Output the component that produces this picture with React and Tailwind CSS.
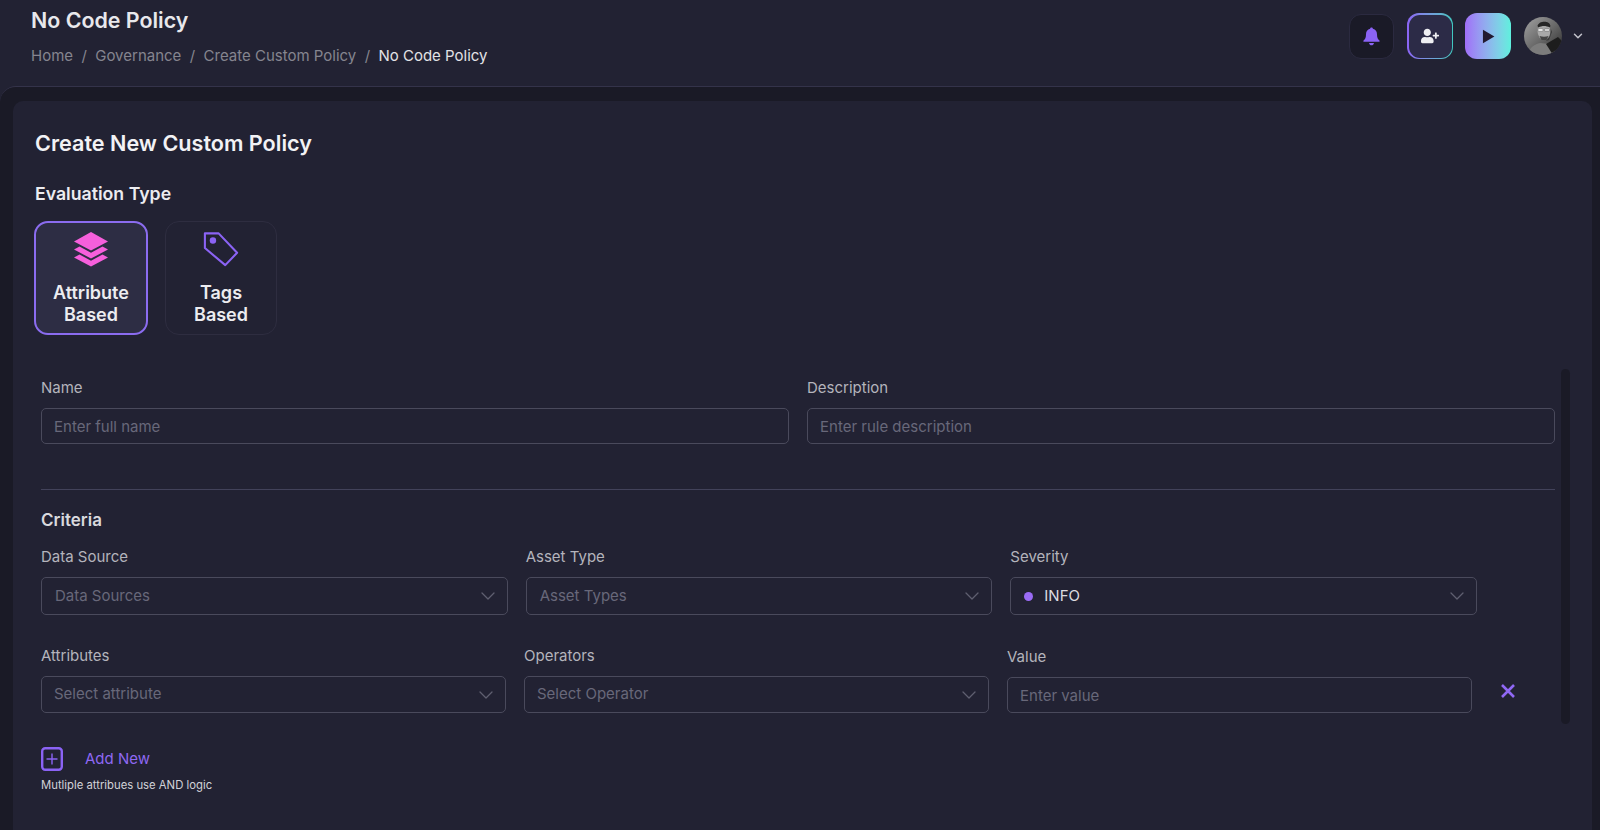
import { ChevronDown } from 'lucide-react'
import { FaUserPlus } from 'react-icons/fa'

function Avatar() {
  return (
    <svg viewBox="0 0 38 38" className="h-[38px] w-[38px] rounded-full">
      <defs>
        <linearGradient id="avatarBg" x1="0" y1="0" x2="1" y2="1">
          <stop offset="0" stopColor="#a3a3a3" />
          <stop offset="0.5" stopColor="#6a6a6a" />
          <stop offset="1" stopColor="#2a2a2a" />
        </linearGradient>
      </defs>
      <rect width="38" height="38" fill="url(#avatarBg)" />
      <path d="M4 38c1-8 7-11 12-12l10 1 8 11z" fill="#7c7c7c" />
      <path d="M22 27l12-7 4 4v14H29z" fill="#1d1d1d" />
      <ellipse cx="20" cy="14" rx="6.5" ry="9" fill="#a8a8a8" />
      <path d="M25 7c2 3 2 8 1 12l-4 5 3-1 3-8z" fill="#3a3a3a" />
      <path d="M13.5 9c1-5 12-6 13 0l-1 1.500c-3-2-8-2-11 0z" fill="#262626" />
      <rect x="14" y="11.5" width="5" height="3" rx="1" fill="#e4e4e4" stroke="#555" strokeWidth="0.4" />
      <rect x="20.5" y="11.5" width="5" height="3" rx="1" fill="#d0d0d0" stroke="#555" strokeWidth="0.4" />
      <path d="M15.5 19c3 1 6 1 9 0l-2 4h-5z" fill="#444" />
    </svg>
  )
}

function BellIcon() {
  return (
    <svg viewBox="0 0 17 19" className="h-[19px] w-[17px]" fill="#8b63f5">
      <path d="M8.5 0.5c.8 0 1.300.5 1.400 1.300C12.600 2.400 14 4.600 14 7.200c0 3.200.8 5 2.600 6.600.3.3.1.9-.4.9H.8c-.5 0-.7-.6-.4-.9C2.200 12.200 3 10.400 3 7.200c0-2.600 1.400-4.800 4.100-5.400.1-.8.6-1.300 1.400-1.300z" />
      <path d="M6 16h5c-.3 1.500-1.300 2.300-2.500 2.300S6.300 17.500 6 16z" />
    </svg>
  )
}

function Header() {
  return (
    <header className="flex h-[86px] shrink-0 items-start justify-between pl-[31px] pr-[15px]">
      <div>
        <h1 className="mt-[7px] text-[21.4px] leading-[26px] font-semibold text-[#e8e8ec]">No Code Policy</h1>
        <nav className="mt-[12px] flex items-center gap-[8.4px] text-[15px] leading-[22px] text-[#85858f]">
          <span>Home</span>
          <span>/</span>
          <span>Governance</span>
          <span>/</span>
          <span>Create Custom Policy</span>
          <span>/</span>
          <span className="text-[#e2e2e6]">No Code Policy</span>
        </nav>
      </div>
      <div className="mt-[13px] flex items-center">
        <button className="flex h-[45px] w-[45px] items-center justify-center rounded-[12px] border border-[#2b2a40] bg-[#1a1a27]">
          <BellIcon />
        </button>
        <div className="ml-[13px] h-[46px] w-[46px] rounded-[12px] bg-gradient-to-r from-[#8b63f5] to-[#3fc9c0] p-[1.5px]">
          <button className="flex h-full w-full items-center justify-center rounded-[11px] bg-[#2c2b47] text-[#eeeef2]">
            <FaUserPlus size={18} />
          </button>
        </div>
        <button className="ml-[12px] flex h-[46px] w-[46px] items-center justify-center rounded-[12px] bg-gradient-to-r from-[#a06ef7] to-[#5ef0dd]">
          <svg viewBox="0 0 12 14" className="h-[15px] w-[13px]">
            <path d="M0.8 0.8L11.5 7L0.8 13.2z" fill="#221a30" />
          </svg>
        </button>
        <div className="ml-[13px]">
          <Avatar />
        </div>
        <ChevronDown size={14} strokeWidth={2.5} className="ml-[9px] text-[#c4c4cc]" />
      </div>
    </header>
  )
}

function TypeCard({ active, icon, children, width }) {
  return (
    <div
      className={[
        'flex h-[114px] flex-col items-center rounded-[14px] pt-[8px] text-center text-[18px] leading-[21.5px] font-semibold text-[#ececf0]',
        width,
        active ? 'border-2 border-[#8b6cf0] bg-[#2d2d44]' : 'border border-[#2e2d40] bg-[#222233]',
      ].join(' ')}
    >
      {icon}
      <div className="mt-[15px]">{children}</div>
    </div>
  )
}

function LayersIcon() {
  return (
    <svg viewBox="0 0 36 36" className="h-[36px] w-[36px]" fill="#f65fdc">
      <path d="M18 1L35 10.5L18 19.5L1 10.5z" />
      <path d="M6.5 15.5L18 21.8L29.5 15.5L35 18.5L18 27.5L1 18.5z" />
      <path d="M6.5 23.5L18 29.8L29.5 23.5L35 26.5L18 35.5L1 26.5z" />
    </svg>
  )
}

function TagIcon() {
  return (
    <svg viewBox="0 0 38 38" className="mt-[1px] h-[36px] w-[36px]" fill="none">
      <path d="M2 2.5H16.5L36 23L23.5 36L2 18z" stroke="#8b63f5" strokeWidth="2.2" strokeLinejoin="round" />
      <circle cx="10.5" cy="10" r="3.4" fill="#8b63f5" />
    </svg>
  )
}

function Field({ label, placeholder, className }) {
  return (
    <div className={className}>
      <label className="block text-[15px] leading-[20px] text-[#b4b4bc]">{label}</label>
      <div className="mt-[10px] flex h-[36px] items-center rounded-[5px] border border-[#4a4a5c] px-[12px] pt-[2px] text-[15px] text-[#68687a]">
        {placeholder}
      </div>
    </div>
  )
}

function SelectField({ label, children, className, boxClassName = 'h-[38px] pl-[13px]' }) {
  return (
    <div className={className}>
      <label className="block text-[15px] leading-[20px] text-[#b4b4bc]">{label}</label>
      <div className={'mt-[10px] flex items-center justify-between rounded-[5px] border border-[#4a4a5c] pr-[7px] text-[15px] text-[#68687a] ' + boxClassName}>
        <div className="flex items-center">{children}</div>
        <ChevronDown size={24} strokeWidth={1.3} className="text-[#5f5f70]" />
      </div>
    </div>
  )
}

export default function App() {
  return (
    <div className="flex h-[830px] w-[1600px] flex-col overflow-hidden bg-[#222233] font-['Inter',sans-serif]">
      <Header />
      <main className="min-h-0 flex-1 rounded-tl-[16px] border-t border-[#34334a] bg-[#1a1a26] pl-[13px] pr-[8px] pt-[14px]">
        <div className="h-[760px] rounded-t-[10px] bg-[#222233]">
          <div className="pl-[22px] pt-[27px]">
            <h2 className="text-[21.6px] leading-[30px] font-semibold text-[#f2f2f5]">Create New Custom Policy</h2>
            <h3 className="mt-[24px] text-[17.7px] leading-[24px] font-semibold text-[#ececf0]">Evaluation Type</h3>
            <div className="mt-[15px] -ml-[1px] flex gap-[17px]">
              <TypeCard active width="w-[114px]" icon={<LayersIcon />}>
                Attribute
                <br />
                Based
              </TypeCard>
              <TypeCard width="w-[112px]" icon={<TagIcon />}>
                Tags
                <br />
                Based
              </TypeCard>
            </div>
          </div>

          <div className="mt-[34px] flex h-[355px] gap-[6px] pl-[28px] pr-[22px]">
            <div className="min-w-0 flex-1 pt-[9px]">
              <div className="flex gap-[18px]">
                <Field className="flex-1" label="Name" placeholder="Enter full name" />
                <Field className="flex-1" label="Description" placeholder="Enter rule description" />
              </div>
              <div className="mt-[45px] border-t border-[#42425a]" />
              <div className="mt-[19px] text-[17px] leading-[22px] font-semibold text-[#d9d9de]">Criteria</div>
              <div className="mt-[16px] flex gap-[18px] pr-[78px]">
                <SelectField className="flex-1" label="Data Source">Data Sources</SelectField>
                <SelectField className="flex-1" label="Asset Type">Asset Types</SelectField>
                <SelectField className="flex-1" label="Severity">
                  <span className="mr-[11px] h-[9px] w-[9px] rounded-full bg-[#9a6bf5]" />
                  <span className="text-[#dcdce0]">INFO</span>
                </SelectField>
              </div>
              <div className="mt-[31px] flex items-end gap-[18px] pr-[40px]">
                <SelectField className="flex-1" boxClassName="h-[37px] pl-[12px]" label="Attributes">Select attribute</SelectField>
                <SelectField className="flex-1" boxClassName="h-[37px] pl-[12px]" label="Operators">Select Operator</SelectField>
                <Field className="flex-1" label="Value" placeholder="Enter value" />
                <svg viewBox="0 0 14 14" className="mb-[15px] ml-[11px] h-[14px] w-[14px] shrink-0">
                  <path d="M1 1L13 13M13 1L1 13" stroke="#9068f5" strokeWidth="2.6" />
                </svg>
              </div>
            </div>
            <div className="w-[9px] rounded-full bg-[#1a1a26]" />
          </div>

          <div className="mt-[23px] pl-[28px]">
            <div className="flex items-center">
              <svg viewBox="0 0 22 24" className="h-[24px] w-[22px]" fill="none">
                <rect x="1.2" y="1.2" width="19.6" height="21.6" rx="3" stroke="#8b63f5" strokeWidth="2.4" />
                <path d="M11 6.5V17.5M5.5 12H16.5" stroke="#8b63f5" strokeWidth="1.4" />
              </svg>
              <span className="ml-[22px] text-[15px] text-[#8e68f2]">Add New</span>
            </div>
            <p className="mt-[7px] text-[11.3px] leading-[14px] text-[#d2d2d8]">Mutliple attribues use AND logic</p>
          </div>
        </div>
      </main>
    </div>
  )
}
